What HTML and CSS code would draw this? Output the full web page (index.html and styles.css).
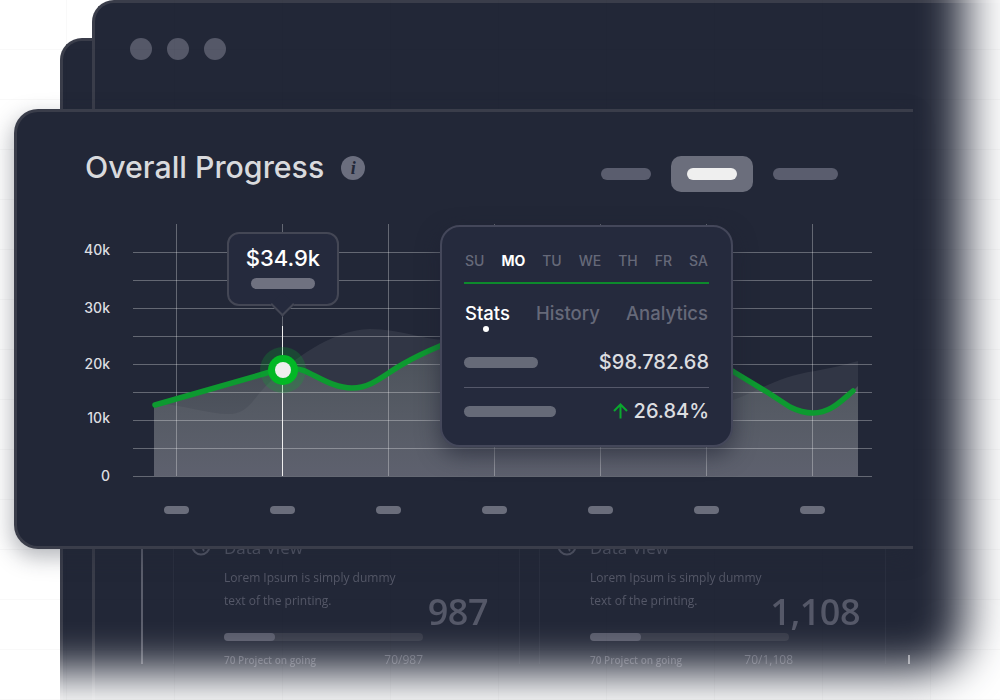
FILE: index.html
```html
<!DOCTYPE html>
<html lang="en">
<head>
    <title>Overall Progress</title>
    <meta name="viewport" content="width=device-width, initial-scale=1.0">
    <link rel="stylesheet" href="styles.css">
</head>
<body>
    <div class="window window-far"></div>

    <div class="window window-near">
        <div class="dots">
            <span class="dot"></span>
            <span class="dot"></span>
            <span class="dot"></span>
        </div>
        <div class="window-body">
            <section class="data-card">
                <h3 class="data-title">
                    <svg class="globe" viewBox="0 0 20 20"><circle cx="10" cy="10" r="8.5"/><path d="M2 8c4 0 5 2 8 1s1 4 3 6M12 2c-1 3 2 3 5 4"/></svg>
                    Data View
                </h3>
                <div class="data-row">
                    <p class="data-text">Lorem Ipsum is simply dummy<br>text of the printing.</p>
                    <span class="data-number">987</span>
                </div>
                <div class="track"><div class="track-fill" style="width: 51px"></div></div>
                <div class="data-foot"><span>70 Project on going</span><span class="data-ratio">70/987</span></div>
            </section>
            <section class="data-card data-card-wide">
                <h3 class="data-title">
                    <svg class="globe" viewBox="0 0 20 20"><circle cx="10" cy="10" r="8.5"/><path d="M2 8c4 0 5 2 8 1s1 4 3 6M12 2c-1 3 2 3 5 4"/></svg>
                    Data View
                </h3>
                <div class="data-row">
                    <p class="data-text">Lorem Ipsum is simply dummy<br>text of the printing.</p>
                    <span class="data-number">1,108</span>
                </div>
                <div class="track"><div class="track-fill" style="width: 51px"></div></div>
                <div class="data-foot"><span>70 Project on going</span><span class="data-ratio">70/1,108</span></div>
            </section>
            <span class="tick"></span>
        </div>
    </div>

    <div class="fade-frame"><div class="fade"></div></div>
    <div class="page-grid"></div>

    <main class="card">
        <header class="card-head">
            <h1 class="card-title">Overall Progress</h1>
            <span class="info">i</span>
            <div class="toggle">
                <span class="toggle-item"><span class="pill pill-short"></span></span>
                <span class="toggle-item is-active"><span class="pill pill-short"></span></span>
                <span class="toggle-item"><span class="pill pill-long"></span></span>
            </div>
        </header>

        <div class="chart">
            <svg class="chart-svg" width="896" height="354" viewBox="17 192 896 354">
                <defs>
                    <linearGradient id="under-line" gradientUnits="userSpaceOnUse" x1="0" y1="350" x2="0" y2="476">
                        <stop offset="0" stop-color="#7c8482" stop-opacity="0.35"/>
                        <stop offset="1" stop-color="#6f717e" stop-opacity="0.72"/>
                    </linearGradient>
                </defs>

                <path class="area-hill" d="M154 403C185 405 210 415 232 414C250 412 255 395 270 382C290 362 330 330 370 329C400 329 425 340 445 340L700 400L733 400C760 390 780 376 815 371C830 368 845 365 858 361V476H154Z"/>
                <path class="area-line" d="M154 405L270 372C285 368 296 367 305 371C322 379 335 388 352 388C372 388 385 374 403 364C415 357 428 351 440 346L600 300L734 372L767 392L790 407C800 412 806 413 813 413C830 413 840 402 853 391L858 386V476H154Z"/>

                <g class="grid">
                    <path d="M133 252.5H872M133 280.5H872M133 308.5H872M133 336.5H872M133 364.5H872M133 392.5H872M133 420.5H872M133 448.5H872M133 476.5H872"/>
                    <path d="M176.5 224V476M282.5 224V476M388.5 224V476M494.5 224V476M600.5 224V476M706.5 224V476M812.5 224V476"/>
                </g>
                <path class="cursor" d="M282.5 326V476"/>

                <path class="line" d="M155 405L270 372C285 368 296 367 305 371C322 379 335 388 352 388C372 388 385 374 403 364C415 357 428 351 440 346L600 300L734 372L767 392L790 407C800 412 806 413 813 413C830 413 840 402 853 391"/>

                <circle class="marker-halo" cx="283" cy="370" r="23"/>
                <circle class="marker-ring" cx="283" cy="370" r="15"/>
                <circle class="marker-core" cx="283" cy="370" r="8"/>

                <g class="y-labels">
                    <text x="110" y="255">40k</text>
                    <text x="110" y="313">30k</text>
                    <text x="110" y="369">20k</text>
                    <text x="110" y="423">10k</text>
                    <text x="110" y="481">0</text>
                </g>

                <g class="x-ticks">
                    <rect x="164" y="506" width="25" height="8" rx="4"/>
                    <rect x="270" y="506" width="25" height="8" rx="4"/>
                    <rect x="376" y="506" width="25" height="8" rx="4"/>
                    <rect x="482" y="506" width="25" height="8" rx="4"/>
                    <rect x="588" y="506" width="25" height="8" rx="4"/>
                    <rect x="694" y="506" width="25" height="8" rx="4"/>
                    <rect x="800" y="506" width="25" height="8" rx="4"/>
                </g>
            </svg>

            <div class="tooltip">
                <div class="tooltip-value">$34.9k</div>
                <div class="tooltip-bar"></div>
            </div>

            <div class="popup">
                <div class="days">
                    <span>SU</span>
                    <span class="is-active">MO</span>
                    <span>TU</span>
                    <span>WE</span>
                    <span>TH</span>
                    <span>FR</span>
                    <span>SA</span>
                </div>
                <div class="tabs">
                    <span class="tab is-active">Stats</span>
                    <span class="tab">History</span>
                    <span class="tab">Analytics</span>
                </div>
                <div class="stat stat-first">
                    <span class="stat-bar stat-bar-short"></span>
                    <span class="stat-value">$98.782.68</span>
                </div>
                <div class="stat">
                    <span class="stat-bar stat-bar-long"></span>
                    <span class="stat-value">
                        <svg class="arrow" width="15" height="16" viewBox="0 0 15 16"><path d="M7.5 15.5V1.5M1 8L7.5 1.5L14 8"/></svg>
                        26.84%
                    </span>
                </div>
            </div>
        </div>
    </main>
</body>
</html>
```

FILE: styles.css
```css
html, body {
    height: 100%;
}
body {
    position: relative;
    margin: 0;
    overflow: hidden;
    background: #fff;
    font-family: Inter, "Liberation Sans", sans-serif;
}

/* windows stacked behind the chart card */
.window {
    position: absolute;
    box-sizing: border-box;
    background: #222737;
    border: 3px solid #3a3d4a;
    border-width: 3px 0 0 3px;
    border-radius: 22px 0 0 0;
}
.window-far {
    left: 60px;
    top: 38px;
    width: 940px;
    height: 662px;
}
.window-near {
    left: 92px;
    top: 0;
    width: 908px;
    height: 700px;
    display: flex;
    flex-direction: column;
}
.dots {
    display: flex;
    gap: 15px;
    padding: 35px 0 0 35px;
}
.dot {
    width: 22px;
    height: 22px;
    border-radius: 50%;
    background: #555868;
}
.window-body {
    display: flex;
    height: 126px;
    margin: auto 0 36px 46px;
    padding-left: 30px;
    border-left: 2px solid #5b5e6c;
    font-family: "Open Sans", "Liberation Sans", sans-serif;
    color: #555868;
}
.data-card {
    box-sizing: border-box;
    width: 347px;
    margin-right: 19px;
    padding: 0 31px 0 50px;
    border-left: 1px solid #2a2f3f;
    border-right: 1px solid #2a2f3f;
    filter: blur(0.4px);
}
.data-card-wide {
    margin-right: 0;
    padding-right: 25px;
}
.data-title {
    position: relative;
    height: 20px;
    margin: 0;
    font-size: 17px;
    font-weight: 400;
    line-height: 20px;
}
.globe {
    position: absolute;
    left: -33px;
    top: -2px;
    width: 20px;
    height: 20px;
    fill: none;
    stroke: #555868;
    stroke-width: 2;
}
.data-row {
    display: flex;
    justify-content: space-between;
    height: 64px;
    margin-top: 8px;
}
.data-text {
    margin: 0;
    font-size: 12px;
    font-weight: 500;
    line-height: 23px;
}
.data-number {
    align-self: flex-end;
    font-size: 36px;
    font-weight: 600;
    letter-spacing: -0.5px;
    line-height: 36px;
}
.track {
    width: 199px;
    height: 8px;
    margin-top: 3px;
    border-radius: 4px;
    background: #333745;
}
.track-fill {
    height: 100%;
    border-radius: 4px;
    background: #555868;
}
.data-foot {
    display: flex;
    justify-content: space-between;
    width: 199px;
    margin-top: 12px;
    font-size: 10px;
    font-weight: 600;
    line-height: 14px;
}
.data-card-wide .data-foot {
    width: 203px;
}
.data-ratio {
    font-size: 12px;
    font-weight: 400;
}
.tick {
    align-self: flex-end;
    width: 2px;
    height: 9px;
    margin-left: 22px;
    background: #8a8c96;
}

/* white fade over the right and bottom of the back windows */
.fade-frame {
    position: absolute;
    inset: 0;
    overflow: hidden;
}
.fade {
    position: absolute;
    left: -300px;
    top: -300px;
    width: 1400px;
    height: 1107px;
    border-radius: 180px;
    box-shadow: inset 0 0 45px 135px #fff;
}
.page-grid {
    position: absolute;
    inset: 0;
    background-image:
        repeating-linear-gradient(to bottom, transparent 0 49px, rgba(0, 0, 0, 0.025) 49px 50px),
        repeating-linear-gradient(to right, transparent 0 66px, rgba(0, 0, 0, 0.025) 66px 67px, transparent 67px 108px);
}

/* chart card */
.card {
    position: absolute;
    left: 14px;
    top: 109px;
    box-sizing: border-box;
    width: 899px;
    height: 440px;
    background: #222737;
    border: 3px solid #3a3d4a;
    border-right: none;
    border-radius: 24px 0 0 24px;
    box-shadow: -2px 8px 22px rgba(34, 39, 55, 0.35);
}
.card-head {
    display: flex;
    align-items: center;
    height: 36px;
    padding: 37px 0 7px 68px;
}
.card-title {
    margin: 0;
    font-size: 30.3px;
    font-weight: 500;
    color: #d9dadd;
}
.info {
    width: 24px;
    height: 24px;
    margin: 2px 0 0 17px;
    border-radius: 50%;
    background: #6b6e7e;
    color: #222737;
    font-family: "Liberation Serif", serif;
    font-size: 18px;
    font-style: italic;
    font-weight: 700;
    line-height: 24px;
    text-align: center;
}
.toggle {
    position: absolute;
    left: 584px;
    top: 44px;
    display: flex;
    align-items: center;
    gap: 20px;
}
.toggle-item {
    display: flex;
    align-items: center;
    height: 36px;
    border-radius: 10px;
}
.toggle-item.is-active {
    padding: 0 16px;
    background: #6b6e7c;
}
.pill {
    height: 12px;
    border-radius: 6px;
    background: #5a5d6e;
}
.pill-short {
    width: 50px;
}
.pill-long {
    width: 65px;
}
.is-active .pill {
    background: #efefef;
}

.chart {
    position: relative;
}
.chart-svg {
    display: block;
    font-family: Inter, "Liberation Sans", sans-serif;
}
.area-hill {
    fill: #fff;
    fill-opacity: 0.07;
}
.area-line {
    fill: url(#under-line);
}
.grid path {
    fill: none;
    stroke: rgba(255, 255, 255, 0.3);
    stroke-width: 1;
}
.cursor {
    stroke: #eee;
    stroke-width: 1;
}
.line {
    fill: none;
    stroke: #0d9a30;
    stroke-width: 5.5;
    stroke-linecap: round;
    stroke-linejoin: round;
}
.marker-halo {
    fill: #0aa82e;
    fill-opacity: 0.25;
}
.marker-ring {
    fill: #02b825;
}
.marker-core {
    fill: #eee;
}
.y-labels text {
    fill: #dcdde0;
    font-size: 14px;
    font-weight: 500;
    text-anchor: end;
}
.x-ticks rect {
    fill: #6a6d7b;
}

/* floating value above the marker */
.tooltip {
    position: absolute;
    left: 210px;
    top: 40px;
    box-sizing: border-box;
    width: 112px;
    height: 74px;
    padding-top: 10px;
    background: #252a3d;
    border: 2px solid #444755;
    border-radius: 12px;
}
.tooltip::after {
    content: "";
    position: absolute;
    left: 45px;
    bottom: -9px;
    width: 17px;
    height: 17px;
    box-sizing: border-box;
    background: #252a3d;
    border-right: 2px solid #444755;
    border-bottom: 2px solid #444755;
    transform: rotate(45deg);
}
.tooltip-value {
    font-size: 22px;
    font-weight: 500;
    line-height: 28px;
    color: #fff;
    text-align: center;
}
.tooltip-bar {
    width: 64px;
    height: 11px;
    margin: 6px auto 0;
    border-radius: 6px;
    background: #6f7180;
}

/* floating stats panel */
.popup {
    position: absolute;
    left: 423px;
    top: 33px;
    box-sizing: border-box;
    width: 293px;
    height: 222px;
    padding: 0 22px;
    background: #252a3d;
    border: 2px solid #44475a;
    border-radius: 20px;
    box-shadow: 0 8px 22px rgba(30, 34, 50, 0.6);
}
.days {
    display: flex;
    justify-content: space-between;
    height: 57px;
    padding: 0 1px;
    box-sizing: border-box;
    border-bottom: 2px solid #0d8a2c;
    font-size: 14px;
    font-weight: 500;
    line-height: 68px;
    color: #666979;
}
.days .is-active {
    color: #fff;
    font-weight: 700;
}
.tabs {
    display: flex;
    justify-content: space-between;
    margin-top: 18px;
    padding: 0 1px;
    font-size: 18.5px;
    font-weight: 500;
    line-height: 22px;
    color: #666979;
}
.tab.is-active {
    position: relative;
    color: #fff;
}
.tab.is-active::after {
    content: "";
    position: absolute;
    left: 18px;
    top: 24px;
    width: 6px;
    height: 6px;
    border-radius: 50%;
    background: #fff;
}
.stat {
    display: flex;
    align-items: center;
    justify-content: space-between;
    height: 46px;
}
.stat-first {
    height: 50px;
    margin-top: 13px;
    border-bottom: 1px solid #55586a;
}
.stat-bar {
    height: 11px;
    border-radius: 6px;
    background: #666a78;
}
.stat-bar-short {
    width: 74px;
}
.stat-bar-long {
    width: 92px;
}
.stat-value {
    display: flex;
    align-items: center;
    gap: 6px;
    font-size: 20px;
    font-weight: 500;
    color: #dcdde0;
}
.arrow {
    fill: none;
    stroke: #0aa82e;
    stroke-width: 2;
}
```
